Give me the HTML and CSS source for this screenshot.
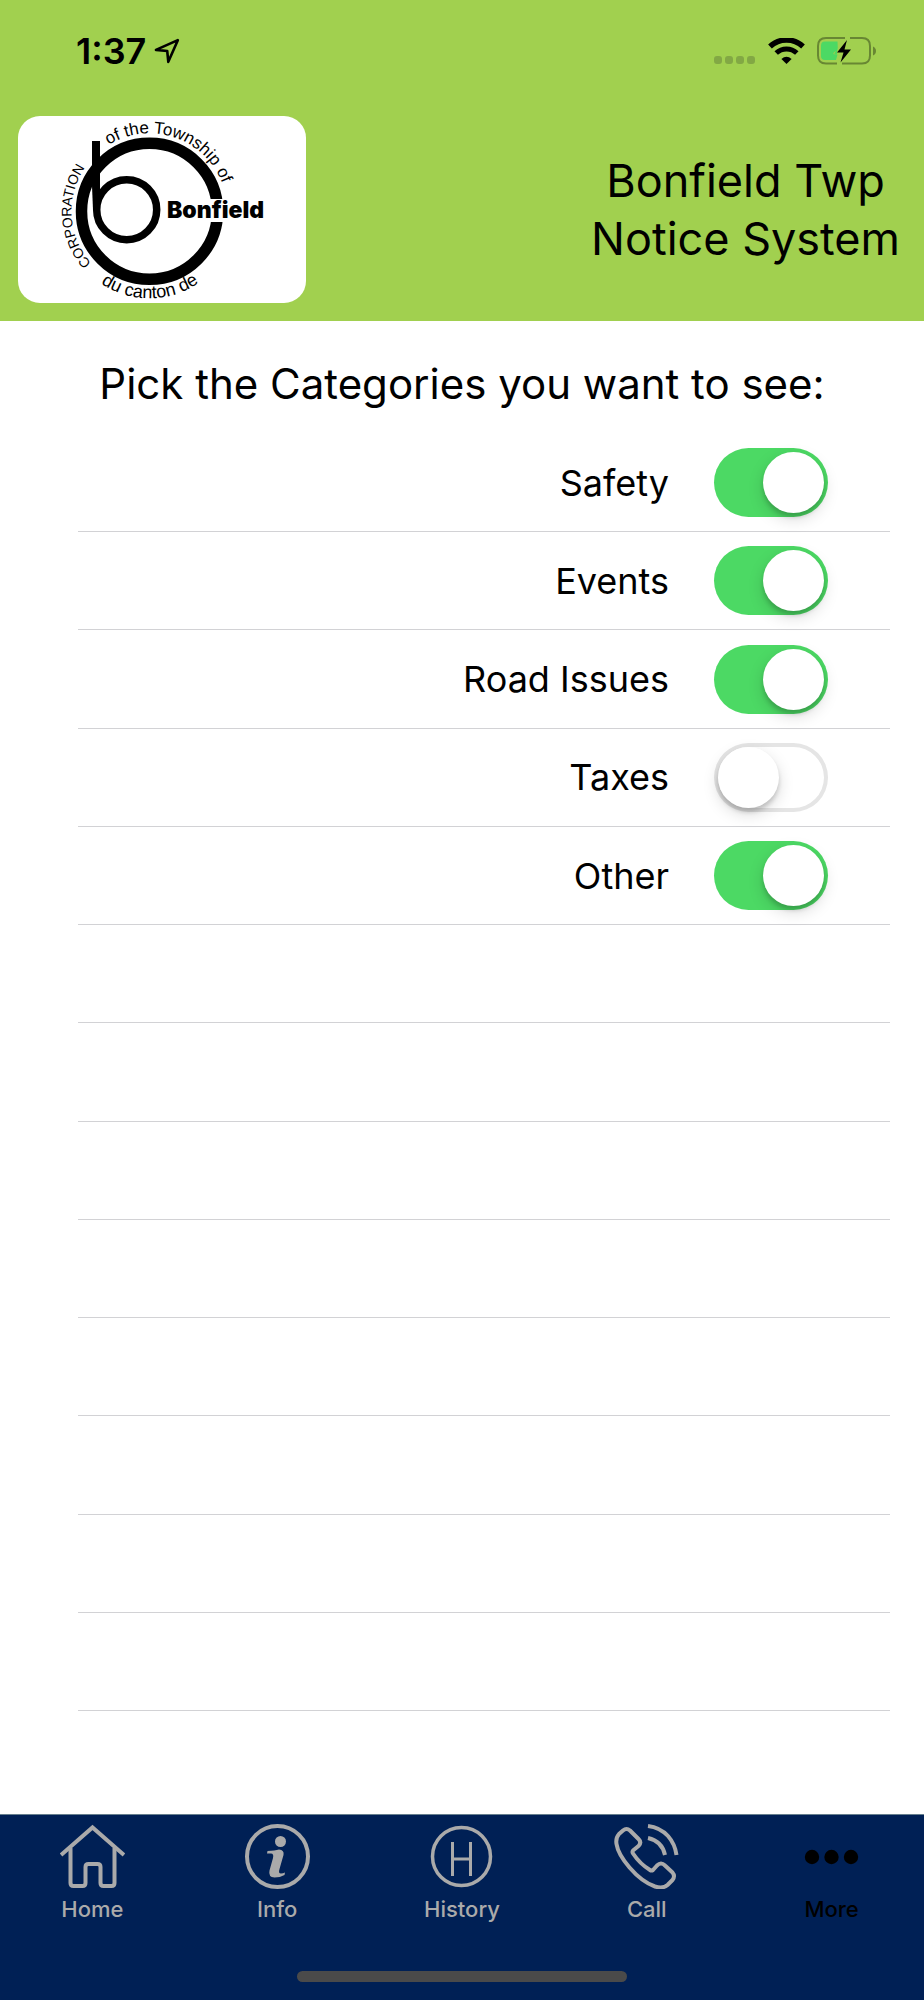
FILE: index.html
```html
<!DOCTYPE html>
<html lang="en">
<head>
    <meta charset="UTF-8">
    <meta name="viewport" content="width=device-width, initial-scale=1.0">
    <title>Bonfield Twp Notice System</title>
    <link rel="stylesheet" href="styles.css">
</head>
<body>
    <header class="header">
        <div class="status-bar">
            <div class="status-left">
                <span class="time">1:37</span>
                <svg width="26" height="26" viewBox="0 0 24 24" fill="none" stroke="#000" stroke-width="2.4" stroke-linejoin="round">
                    <path d="M22 2 L1.8 11 L12.2 12 L13.2 22 Z"/>
                </svg>
            </div>
            <div class="status-right">
                <svg width="42" height="27" viewBox="0 0 42 27" fill="#82a844">
                    <rect x="0" y="18" width="8" height="8" rx="3"/>
                    <rect x="11" y="18" width="8" height="8" rx="3"/>
                    <rect x="22" y="18" width="8" height="8" rx="3"/>
                    <rect x="33" y="18" width="8" height="8" rx="3"/>
                </svg>
                <svg width="37" height="27" viewBox="0 0 37 27">
                    <path d="M2 8.5 A24 24 0 0 1 35 8.5" fill="none" stroke="#000" stroke-width="5.4"/>
                    <path d="M8.2 15 A15 15 0 0 1 28.8 15" fill="none" stroke="#000" stroke-width="5"/>
                    <path d="M13.4 21 Q18.5 16.5 23.6 21 L18.5 26 Z"/>
                </svg>
                <svg width="60" height="28" viewBox="0 0 60 28">
                    <path d="M28 1 H9 Q1 1 1 9 V18.500 Q1 26.500 9 26.500 H20 M25 26.500 H45 Q53 26.500 53 18.500 V9 Q53 1 45 1 H33" fill="none" stroke="#688733" stroke-width="2"/>
                    <path d="M8 4.500 H20.500 V13 Q14.500 16 17 17.500 H20.500 L19 23 H8 Q4 23 4 19 V8.500 Q4 4.500 8 4.500 Z" fill="#4cd964"/>
                    <path d="M20 4.500 L20.500 11 L17 17.500 L20 17.500 Z" fill="#4cd964"/>
                    <path d="M30 3 L20 15.500 H26.500 L23.500 25.500 L34 12.500 H27.500 Z"/>
                    <path d="M56 9.500 Q59 11 59 14 Q59 17 56 18.500 Z" fill="#688733"/>
                </svg>
            </div>
        </div>
        <div class="banner">
            <div class="logo">
                <svg width="288" height="187" viewBox="0 0 288 187" role="img" aria-label="Corporation of the Township of Bonfield">
                    <defs>
                        <path id="ring" d="M131.500 173.300 a78 78 0 0 1 0 -156 a78 78 0 0 1 0 156"/>
                        <path id="bowl" d="M44.500 95.300 a87 87 0 0 0 174 0"/>
                    </defs>
                    <circle cx="131.500" cy="95.300" r="68" fill="none" stroke="#000" stroke-width="11.500"/>
                    <rect x="148" y="83" width="62" height="23" fill="#fff"/>
                    <circle cx="108.700" cy="93.700" r="30" fill="none" stroke="#000" stroke-width="7.500"/>
                    <path d="M74 25 H82 V80 L80 94 H75 L74 70 Z"/>
                    <text class="logo-name" x="149" y="102">Bonfield</text>
                    <text class="logo-caps"><textPath href="#ring" startOffset="117">CORPORATION</textPath></text>
                    <text class="logo-curve"><textPath href="#ring" startOffset="270">of the Township of</textPath></text>
                    <text class="logo-curve logo-bowl"><textPath href="#bowl" startOffset="137">du canton de</textPath></text>
                </svg>
            </div>
            <h1>Bonfield Twp<br>Notice System</h1>
        </div>
    </header>

    <main class="content">
        <h2>Pick the Categories you want to see:</h2>
        <ul class="categories">
            <li>
                <label for="safety">Safety</label>
                <input type="checkbox" class="switch" id="safety" checked>
            </li>
            <li>
                <label for="events">Events</label>
                <input type="checkbox" class="switch" id="events" checked>
            </li>
            <li>
                <label for="road">Road Issues</label>
                <input type="checkbox" class="switch" id="road" checked>
            </li>
            <li>
                <label for="taxes">Taxes</label>
                <input type="checkbox" class="switch" id="taxes">
            </li>
            <li>
                <label for="other">Other</label>
                <input type="checkbox" class="switch" id="other" checked>
            </li>
            <!-- empty rows -->
            <li></li>
            <li></li>
            <li></li>
            <li></li>
            <li></li>
            <li></li>
            <li></li>
            <li></li>
        </ul>
    </main>

    <footer class="footer">
        <nav class="tabs">
            <a href="#home">
                <svg width="65" height="65" viewBox="0 0 65 65" fill="none" stroke="#aaa" stroke-width="4" stroke-linejoin="round">
                    <path d="M1 31 L32.500 3.500 L64 31" stroke-linejoin="miter"/>
                    <path d="M10.500 24 V59 Q10.500 62 13.500 62 H22.500 Q25.500 62 25.500 59 V43 Q25.500 40 28.500 40 H37.500 Q40.500 40 40.500 43 V59 Q40.500 62 43.500 62 H51.500 Q54.500 62 54.500 59 V24"/>
                </svg>
                <span>Home</span>
            </a>
            <a href="#info">
                <svg width="65" height="65" viewBox="0 0 65 65" fill="#aaa">
                    <circle cx="32.500" cy="32.500" r="30.500" fill="none" stroke="#aaa" stroke-width="4"/>
                    <circle cx="35.500" cy="17.500" r="5.500"/>
                    <path d="M22.500 27 Q30 26.500 34 25.500 Q39.500 26 38.500 31 L34.500 45 Q33 49.500 36 49.500 Q38 49.500 40 48.500 L39.500 51 Q35 53.500 29.500 53.500 Q23 53 24.500 46.500 L28 34 Q29 29.500 26 29.500 H22 Z"/>
                </svg>
                <span>Info</span>
            </a>
            <a href="#history">
                <svg width="65" height="65" viewBox="0 0 65 65" fill="none" stroke="#aaa" stroke-width="3">
                    <circle cx="32.500" cy="32.500" r="29" stroke-width="3.500"/>
                    <path d="M23.500 18 V52 M41.500 18 V52 M23.500 35 H41.500"/>
                </svg>
                <span>History</span>
            </a>
            <a href="#call">
                <svg width="65" height="65" viewBox="0 0 65 65" fill="none" stroke="#aaa" stroke-width="4" stroke-linejoin="round">
                    <path d="M9 6.500 Q12.500 3.500 16 6.500 L24.500 15 Q28 18.500 24.500 22 L19 26.500 Q18 28 19 29.500 Q26 40 36 46 Q37.500 47 39 46 L43 41.500 Q47 37.500 51 41.500 L58.500 48.500 Q61.500 52 58.500 56 L53.500 61 Q49 65 41 62.500 Q28 58 15.500 43.500 Q4 30 2.500 20 Q1.500 14 5 10 Z"/>
                    <path d="M34 2 Q46 3.500 54 12 Q61 20 62.500 31 M34 14 Q48 17 51 31"/>
                </svg>
                <span>Call</span>
            </a>
            <a href="#more" class="active">
                <svg width="65" height="65" viewBox="0 0 65 65">
                    <circle cx="13" cy="33" r="7.200"/>
                    <circle cx="32.500" cy="33" r="7.200"/>
                    <circle cx="52" cy="33" r="7.200"/>
                </svg>
                <span>More</span>
            </a>
        </nav>
        <div class="home-indicator"></div>
    </footer>
</body>
</html>
```
FILE: styles.css
```css
*{
    padding: 0;
    margin: 0;
    box-sizing: border-box;
}
body{
    min-height: 100vh;
    display: flex;
    flex-direction: column;
    background-color: #fff;
    color: #000;
    font-family: Inter, sans-serif;
}
svg{
    display: block;
}

/* header */
.header{
    background-color: #a1d04f;
    padding-bottom: 18px;
}
.status-bar{
    height: 102px;
    padding: 0 47px 0 76px;
    display: flex;
    justify-content: space-between;
    align-items: center;
}
.status-left{
    display: flex;
    align-items: center;
    gap: 8px;
}
.time{
    font-size: 36px;
    font-weight: 600;
}
.status-right{
    display: flex;
    align-items: center;
    gap: 12px;
}
.banner{
    display: flex;
    justify-content: space-between;
    align-items: center;
    padding: 14px 24px 0 18px;
}
.logo{
    background-color: #fff;
    border-radius: 22px;
}
.logo-name{
    font-size: 23px;
    font-weight: 900;
}
.logo-caps, .logo-curve{
    font-family: "Liberation Sans", sans-serif;
    text-anchor: middle;
}
.logo-caps{
    font-size: 14px;
}
.logo-curve{
    font-size: 17px;
}
.logo-bowl{
    font-size: 18px;
}
h1{
    font-size: 45px;
    font-weight: 400;
    line-height: 58px;
    text-align: center;
}

/* categories */
.content{
    flex: 1;
    display: flex;
    flex-direction: column;
    padding: 34px 34px 103px 78px;
}
h2{
    font-size: 42px;
    font-weight: 400;
    line-height: 58px;
    padding-right: 44px;
    margin-bottom: 21px;
    text-align: center;
}
.categories{
    flex: 1;
    display: grid;
    grid-auto-rows: 1fr;
    list-style: none;
}
.categories li{
    min-height: 70px;
    display: flex;
    justify-content: flex-end;
    align-items: center;
    gap: 45px;
    padding-right: 62px;
    border-bottom: 1px solid #d2d2d5;
}
.categories label{
    font-size: 36px;
}
.switch{
    appearance: none;
    width: 114px;
    height: 69px;
    padding: 4px;
    border-radius: 35px;
    background-color: #fff;
    box-shadow: inset 0 0 0 4px #e5e5e5;
    display: flex;
    cursor: pointer;
}
.switch::before{
    content: "";
    width: 61px;
    height: 61px;
    border-radius: 50%;
    background-color: #fff;
    box-shadow: 0 6px 16px rgba(0, 0, 0, 0.15), 0 4px 4px rgba(0, 0, 0, 0.16);
}
.switch:checked{
    justify-content: flex-end;
    background-color: #4cd964;
    box-shadow: none;
}

/* bottom tabs */
.footer{
    background-color: #002055;
    border-top: 1px solid #667f8e;
    padding: 9px 0 18px;
}
.tabs{
    display: grid;
    grid-template-columns: repeat(5, 1fr);
}
.tabs a{
    display: flex;
    flex-direction: column;
    align-items: center;
    gap: 6px;
    color: #aaa;
    font-size: 22px;
    font-weight: 500;
    line-height: 28px;
    text-decoration: none;
}
.tabs a.active{
    color: #000;
}
.home-indicator{
    width: 330px;
    max-width: 60%;
    height: 11px;
    margin: 48px auto 0;
    border-radius: 6px;
    background-color: #4a4a4a;
}
```
